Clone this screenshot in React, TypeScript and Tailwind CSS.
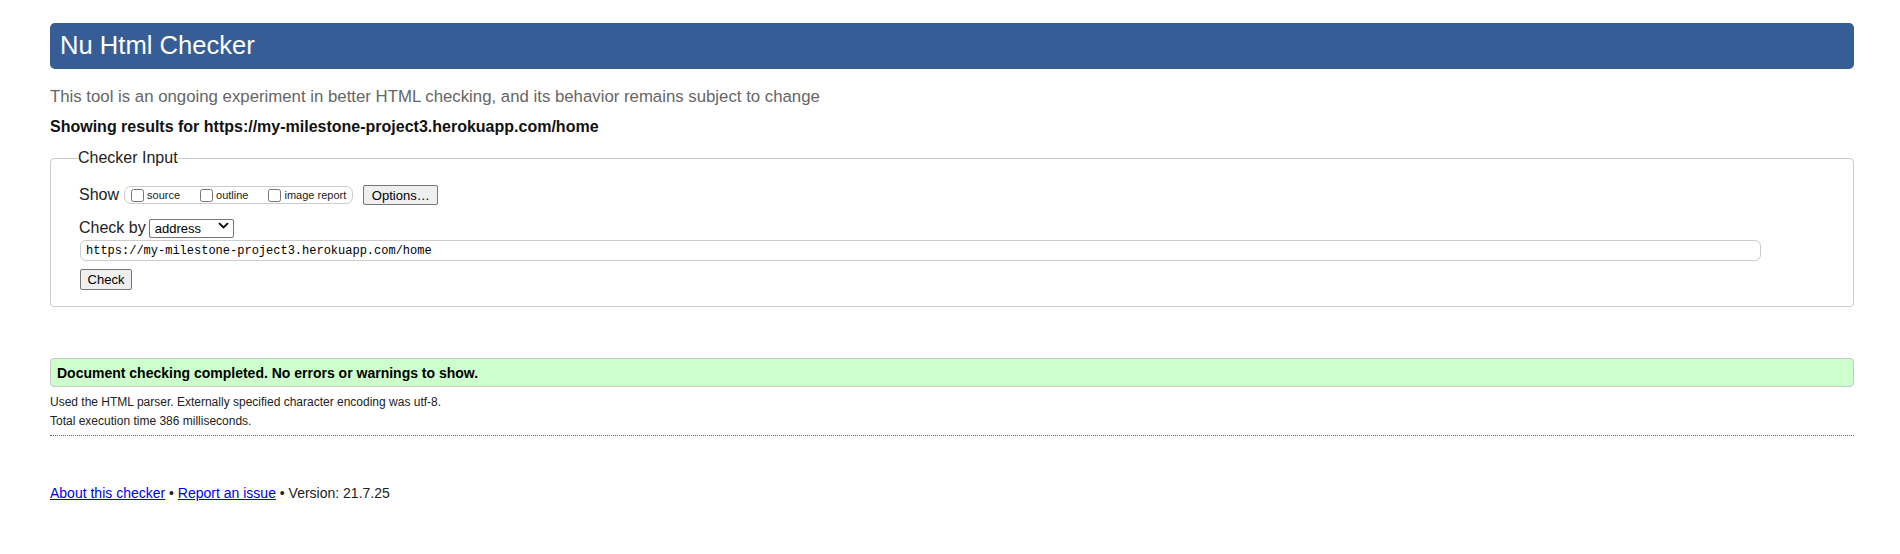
import React from 'react'

const url = 'https://my-milestone-project3.herokuapp.com/home'

const ShowOption: React.FC<{ label: string }> = ({ label }) => (
  <label className="flex items-center gap-[3px] text-[11px] leading-none text-[#222]">
    <input type="checkbox" className="m-0 h-[13px] w-[13px]" />
    {label}
  </label>
)

export default function App() {
  return (
    <div className="min-h-[554px] bg-white pr-[46px] pl-[50px] pt-[23px] font-['Liberation_Sans',Arial,sans-serif] text-black">
      <h1 className="flex h-[46px] items-center rounded-[5px] bg-[#365d95] pl-[10px] text-[25.6px] leading-none font-normal text-white">
        Nu Html Checker
      </h1>
      <p className="mt-[19px] text-[16.8px] leading-[18px] text-[#666]">
        This tool is an ongoing experiment in better HTML checking, and its behavior remains subject to change
      </p>
      <p className="mt-[12px] text-[16px] leading-[18px] font-bold text-[#111]">
        Showing results for {url}
      </p>

      <fieldset className="mt-[13px] rounded-[4px] border border-[#ccc] pr-[26px] pb-[16px] pl-[27px]">
        <legend className="px-0 text-[16px] leading-[18px] text-[#222]">Checker Input</legend>
        <div className="pt-[17px] pl-[1px]">
          <div className="flex h-[22px] items-center">
            <span className="text-[16px] leading-[18px] text-[#222]">Show</span>
            <div className="ml-[5px] flex h-[18px] items-center gap-[20px] rounded-[7px] border border-[#ccc] pr-[6px] pl-[6px]">
              <ShowOption label="source" />
              <ShowOption label="outline" />
              <ShowOption label="image report" />
            </div>
            <button
              type="button"
              className="ml-[10px] h-[20px] w-[75px] rounded-[2px] border border-[#767676] bg-[#efefef] text-[13px] leading-none text-black"
            >
              Options…
            </button>
          </div>

          <div className="mt-[11px] flex h-[21px] items-center">
            <span className="text-[16px] leading-[18px] text-[#222]">Check by</span>
            <div className="relative ml-[3px]">
              <select className="h-[19px] w-[85px] appearance-none rounded-[2px] border border-[#767676] bg-white pl-[5px] text-[13px] leading-none text-black">
                <option>address</option>
                <option>file upload</option>
                <option>text input</option>
              </select>
              <svg
                className="pointer-events-none absolute top-[6px] right-[5px]"
                width="11"
                height="7"
                viewBox="0 0 11 7"
                fill="none"
              >
                <path d="M1 1.2 L5.5 5.5 L10 1.2" stroke="#000" strokeWidth="1.8" />
              </svg>
            </div>
          </div>

          <input
            type="text"
            defaultValue={url}
            className="mt-[2px] ml-[1px] block h-[21px] w-[1681px] rounded-[6px] border border-[#ccc] bg-white px-[5px] font-['Liberation_Mono','Courier_New',monospace] text-[12px] leading-none text-black"
          />

          <button
            type="button"
            className="mt-[8px] ml-[1px] block h-[21px] w-[52px] rounded-[2px] border border-[#767676] bg-[#efefef] text-[13px] leading-none text-black"
          >
            Check
          </button>
        </div>
      </fieldset>

      <div className="mt-[51px] flex h-[29px] items-center rounded-[4px] border border-[#c8c8c8] bg-[#ccffcc] pl-[6px] text-[14px] leading-[16px] font-bold text-black">
        Document checking completed. No errors or warnings to show.
      </div>
      <p className="mt-[8px] text-[12px] leading-[14px] text-[#222]">
        Used the HTML parser. Externally specified character encoding was utf-8.
      </p>
      <p className="mt-[5px] text-[12px] leading-[14px] text-[#222]">Total execution time 386 milliseconds.</p>
      <hr className="mt-[7px] border-0 border-t border-dotted border-[#666]" />

      <p className="mt-[49px] text-[14px] leading-[16px] text-[#222]">
        <a href="#" className="text-[#0000ee] underline">
          About this checker
        </a>{' '}
        •{' '}
        <a href="#" className="text-[#0000ee] underline">
          Report an issue
        </a>{' '}
        • Version: 21.7.25
      </p>
    </div>
  )
}
